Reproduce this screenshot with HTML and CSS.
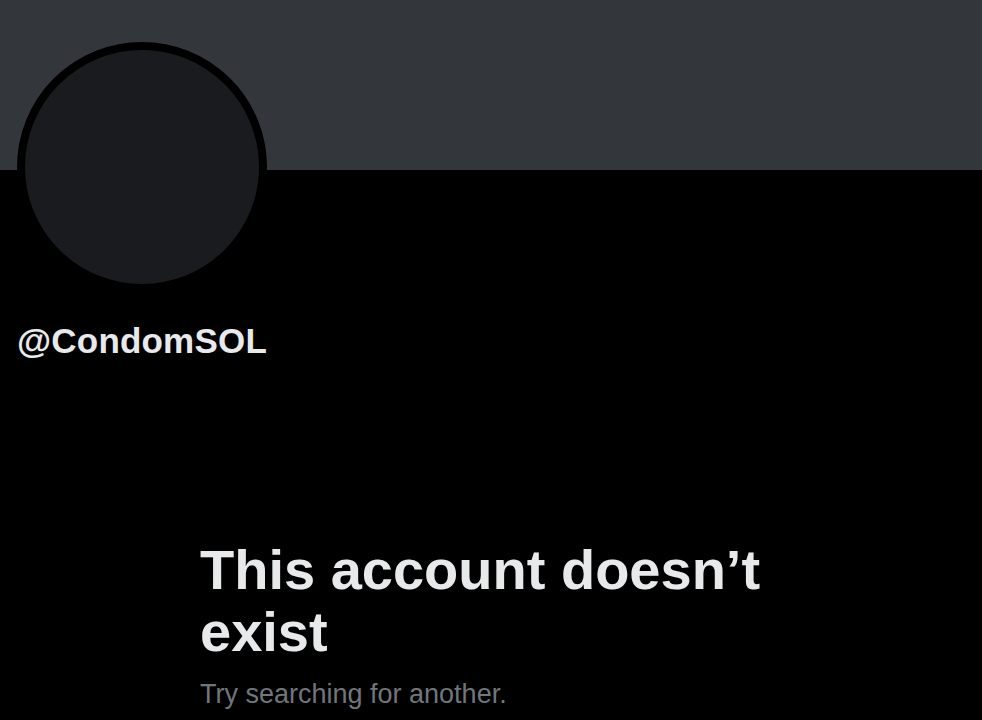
FILE: index.html
```html
<!DOCTYPE html>
<html lang="en">
<head>
<meta charset="utf-8">
<title>@CondomSOL</title>
<link rel="stylesheet" href="styles.css">
</head>
<body>
<div class="profile">
  <div class="banner"></div>
  <div class="avatar"></div>
  <div class="handle">@CondomSOL</div>
  <div class="message">
    <h1 class="title">This account doesn’t exist</h1>
    <p class="subtitle">Try searching for another.</p>
  </div>
</div>
</body>
</html>
```
FILE: styles.css
```css
html, body {
  margin: 0;
  padding: 0;
  background: #000;
}
.profile {
  width: 982px;
  height: 720px;
  overflow: hidden;
  font-family: "Liberation Sans", Arial, sans-serif;
}
.banner {
  height: 170px;
  background: #33363b;
}
.avatar {
  width: 250px;
  height: 250px;
  box-sizing: border-box;
  border-radius: 50%;
  border: 8px solid #000;
  background: #1a1b1e;
  margin: -128px 0 0 17px;
}
.handle {
  margin-top: 29px;
  padding-left: 17px;
  font-size: 35px;
  line-height: 40px;
  font-weight: 700;
  letter-spacing: 0.2px;
  color: #e7e9ea;
}
.message {
  margin-top: 178px;
  padding-left: 200px;
  width: 600px;
}
.title {
  margin: 0;
  font-size: 56px;
  line-height: 62px;
  font-weight: 700;
  color: #e7e9ea;
}
.subtitle {
  margin: 15px 0 0;
  font-size: 27px;
  line-height: 32px;
  color: #71767b;
}
```
